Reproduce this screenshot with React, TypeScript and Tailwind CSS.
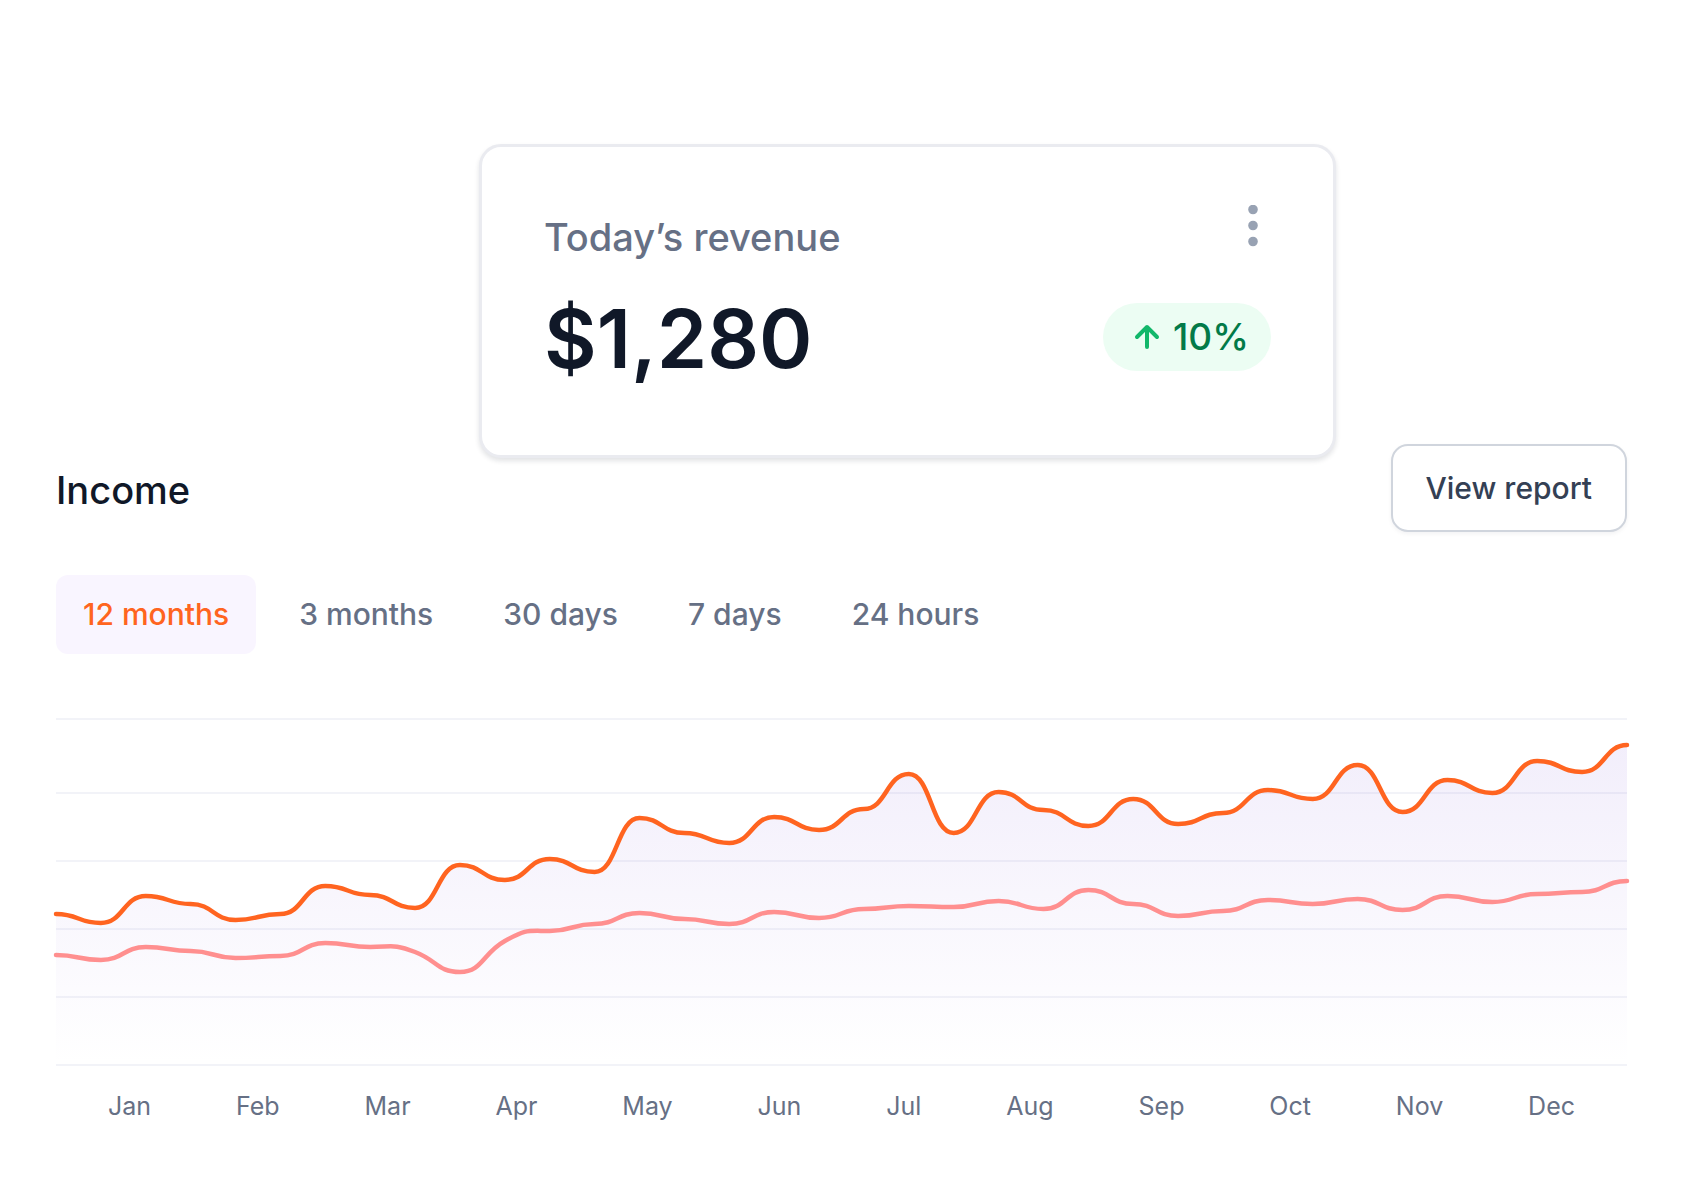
import { useState } from "react";

const WIDTH = 1572;
const HEIGHT = 348;

const GRID = [1, 75, 143, 211, 279, 347];

const CURRENT = [
  196, 205, 178, 186, 202, 196, 168, 177, 190, 147, 162, 141, 154, 100, 115, 125, 99, 112, 91, 56,
  115, 74, 92, 108, 81, 106, 95, 72, 81, 47, 94, 62, 75, 43, 54, 27,
];

const PREVIOUS = [
  237, 242, 229, 233, 240, 238, 225, 229, 234, 254, 223, 213, 206, 195, 201, 206, 194, 200, 191, 188,
  189, 183, 191, 172, 186, 198, 193, 182, 186, 181, 192, 178, 184, 176, 174, 163,
];

// Slopes at points where the line passes through without levelling off.
const PREVIOUS_SLOPES: Record<number, number> = { 8: 0.38, 10: -0.55 };

function buildLine(values: number[], slopes: Record<number, number> = {}) {
  const step = WIDTH / (values.length - 1);
  const handle = step * 0.5;
  let path = `M0 ${values[0]}`;
  for (let i = 1; i < values.length; i++) {
    const x0 = (i - 1) * step;
    const x1 = i * step;
    const y0 = values[i - 1] + (slopes[i - 1] ?? 0) * handle;
    const y1 = values[i] - (slopes[i] ?? 0) * handle;
    path += ` C${x0 + handle} ${y0} ${x1 - handle} ${y1} ${x1} ${values[i]}`;
  }
  return path;
}

const MONTHS = ["Jan", "Feb", "Mar", "Apr", "May", "Jun", "Jul", "Aug", "Sep", "Oct", "Nov", "Dec"];
const RANGES = ["12 months", "3 months", "30 days", "7 days", "24 hours"];

function RevenueCard() {
  return (
    <article className="relative z-10 w-[857px] rounded-[22px] border-[3px] border-[#eaebf0] bg-white px-[62px] pt-[58px] pb-[70px] shadow-[0_3px_5px_rgba(16,24,40,0.12)]">
      <div className="flex items-start justify-between">
        <h2 className="text-[38px] leading-[64px] font-medium text-[#667085]">Today’s revenue</h2>
        <button type="button" aria-label="More options" className="mr-[13px]">
          <svg width="10" height="42" viewBox="0 0 10 42" fill="#98a2b3">
            <circle cx="5" cy="4.5" r="4.8" />
            <circle cx="5" cy="20.5" r="4.8" />
            <circle cx="5" cy="36.5" r="4.8" />
          </svg>
        </button>
      </div>
      <div className="mt-5 flex items-start justify-between">
        <p className="pt-1 text-[81px] leading-[92px] font-semibold text-[#101828]">$1,280</p>
        <p className="mt-[14px] flex h-[68px] items-center gap-3 rounded-full bg-[#ecfdf3] pr-[22px] pl-[30px] text-[37px] font-medium text-[#027a48]">
          <svg width="28" height="28" viewBox="0 0 28 28" fill="none" stroke="#12b76a" strokeWidth="4" strokeLinecap="round" strokeLinejoin="round">
            <path d="M14 24V4M4 14L14 4L24 14" />
          </svg>
          10%
        </p>
      </div>
    </article>
  );
}

function IncomeChart() {
  const current = buildLine(CURRENT);
  const previous = buildLine(PREVIOUS, PREVIOUS_SLOPES);
  return (
    <figure>
      <svg
        role="img"
        aria-label="Income by month"
        className="block h-[348px] w-full overflow-visible"
        viewBox={`0 0 ${WIDTH} ${HEIGHT}`}
        preserveAspectRatio="none"
        fill="none"
      >
        <defs>
          <linearGradient id="income-fill" x1="0" y1="27" x2="0" y2="347" gradientUnits="userSpaceOnUse">
            <stop offset="0" stopColor="#7f56d9" stopOpacity="0.1" />
            <stop offset="1" stopColor="#7f56d9" stopOpacity="0" />
          </linearGradient>
        </defs>
        {GRID.map((y) => (
          <path key={y} d={`M0 ${y}H${WIDTH}`} stroke="#f2f3f8" strokeWidth="2" />
        ))}
        <path d={`${current} V347 H0 Z`} fill="url(#income-fill)" />
        <path d={previous} stroke="#ff8f8f" strokeWidth="4.5" strokeLinecap="round" vectorEffect="non-scaling-stroke" />
        <path d={current} stroke="#ff6420" strokeWidth="4.5" strokeLinecap="round" vectorEffect="non-scaling-stroke" />
      </svg>
      <figcaption className="mt-[21px] flex justify-between px-[52px] text-[25px] leading-[38px] text-[#667085]">
        {MONTHS.map((month) => (
          <span key={month}>{month}</span>
        ))}
      </figcaption>
    </figure>
  );
}

export default function App() {
  const [range, setRange] = useState(RANGES[0]);
  return (
    <main className="min-h-screen bg-white pt-36 pr-[55px] pl-14 font-['Inter',sans-serif]">
      <div className="flex justify-center pl-[132px]">
        <RevenueCard />
      </div>
      <section className="-mt-[14px]">
        <header className="flex items-center justify-between">
          <h1 className="pt-[3px] text-[38px] leading-[56px] font-medium text-[#101828]">Income</h1>
          <button
            type="button"
            className="h-[88px] rounded-[17px] border-2 border-[#d0d5dd] bg-white px-[33px] text-[30px] font-medium text-[#344054] shadow-[0_2px_4px_rgba(16,24,40,0.05)]"
          >
            View report
          </button>
        </header>
        <div role="tablist" aria-label="Period" className="mt-[43px] flex gap-4">
          {RANGES.map((label) => (
            <button
              key={label}
              type="button"
              role="tab"
              aria-selected={label === range}
              onClick={() => setRange(label)}
              className={
                label === range
                  ? "h-[79px] rounded-xl bg-[#f9f5ff] px-[27px] text-[30px] font-medium text-[#ff6420]"
                  : "h-[79px] rounded-xl px-[27px] text-[30px] font-medium text-[#667085]"
              }
            >
              {label}
            </button>
          ))}
        </div>
        <div className="mt-16">
          <IncomeChart />
        </div>
      </section>
    </main>
  );
}
